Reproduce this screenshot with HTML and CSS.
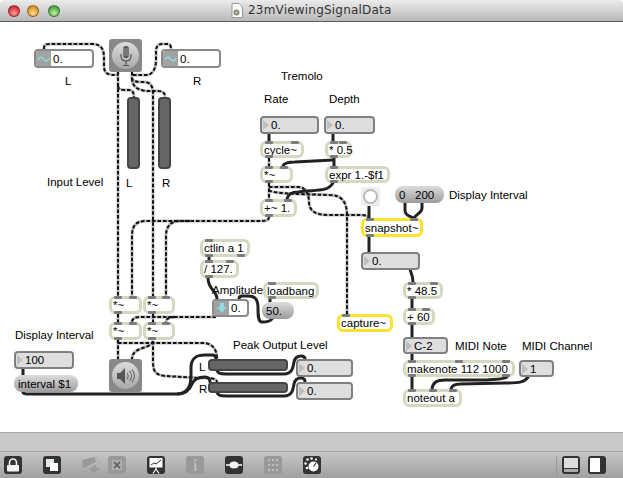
FILE: index.html
```html
<!DOCTYPE html>
<html>
  <head>
    <title>23mViewingSignalData</title>
    <link rel="stylesheet" href="styles.css">
  </head>
  <body>
    <div class="window">
      <div class="titlebar">
        <span class="light red"></span>
        <span class="light yellow"></span>
        <span class="light green"></span>
        <div class="title">
          <svg class="doc" width="12" height="15" viewBox="0 0 12 15">
            <path d="M1 .5h7l3.500 3.500v10.500h-10.500z" fill="#fafafa" stroke="#999"/>
            <circle cx="5.500" cy="9.500" r="3" fill="#8a8a8a"/>
            <circle cx="5.500" cy="9.500" r="1.200" fill="#e8b860"/>
          </svg>
          <span>23mViewingSignalData</span>
        </div>
      </div>

      <div class="canvas">
        <svg class="wires" width="623" height="410" viewBox="0 22 623 410">
          <defs>
            <g id="sigWires">
              <path d="M44 49C44 44 46 44 50 44L92 44C102 44 104 50 104 58L104 66C104 74 108 75 118 75"/>
              <path d="M133 75L146 75C153 75 156 68 156 60L156 52C156 46 158 44 162 44L168 44C170 44 171 46 171 49"/>
              <path d="M118 72L118 296"/>
              <path d="M118 86C118 89 121 90 125 90L129 90C132 90 134 92 134 97"/>
              <path d="M132 72L132 78C132 81 136 82 141 82L144 82C150 82 153 86 153 93L153 296"/>
              <path d="M132 78C132 87 138 90 146 91L158 91C163 91 165 93 165 97"/>
              <path d="M269 217C269 221 265 221 258 221L145 221C136 221 132 226 132 236L132 296"/>
              <path d="M190 221L180 221C171 221 166 226 166 236L166 296"/>
              <path d="M118 314L118 322"/>
              <path d="M153 314L153 322"/>
              <path d="M216 317L140 317C135 317 132 319 132 322"/>
              <path d="M175 317C169 317 166 319 166 322"/>
              <path d="M118 340L118 359"/>
              <path d="M153 341C152 346 145 347 140 349C135 351 132 354 132 359"/>
              <path d="M118 343L203 343C212 343 217 349 217 359"/>
              <path d="M153 341L153 362C153 372 156 375 165 376L200 378C210 378 216 378 217 382"/>
              <path d="M269 158L269 166"/>
              <path d="M269 183L269 199"/>
              <path d="M269 187L298 187C305 187 309 193 309 202C309 211 316 215 328 215L360 215C366 215 368 216 369 218"/>
              <path d="M269 190C270 193 290 194 330 195C342 195 347 203 347 215L347 314"/>
            </g>
          </defs>
          <use href="#sigWires" class="sig-base"/>
          <use href="#sigWires" class="sig-dash"/>
          <g class="msg-wires">
            <path d="M269 134L269 141"/>
            <path d="M333 134L333 141"/>
            <path d="M334 158L334 166"/>
            <path d="M333 160L295 162C287 162 284 163 283 166"/>
            <path d="M333 183C328 191 320 190 305 191L298 192C290 192 288 195 287 199"/>
            <path d="M369 206L369 218"/>
            <path d="M405 203L405 210C405 216 410 216 413 218"/>
            <path d="M422 203L422 208C422 213 416 214 414 218"/>
            <path d="M369 237L369 252"/>
            <path d="M410 269C411 274 413 275 413 282"/>
            <path d="M412 299L412 308"/>
            <path d="M412 325L412 337"/>
            <path d="M412 354L412 360"/>
            <path d="M412 377L412 389"/>
            <path d="M507 377C505 379 500 379 487 380L445 380C437 380 433 382 432 389"/>
            <path d="M528 377C525 382 520 383 505 383L460 384C455 384 452 385 451 389"/>
            <path d="M209 257L209 260"/>
            <path d="M208 278C208 290 217 290 217 299"/>
            <path d="M272 319C270 322 265 322 262 322C258 322 258 315 258 308C258 298 254 296 248 296L242 296C240 296 239 297 239 299"/>
            <path d="M270 299L270 302"/>
            <path d="M23 369L23 375"/>
            <path d="M23 392C23 394 26 394 32 394L176 394C188 394 191 386 191 375L191 368C191 358 196 355 205 355L212 355C215 355 216 357 216 359"/>
            <path d="M178 394C186 394 190 389 192 384C194 379 198 377 205 377C209 377 210 379 210 382"/>
            <path d="M217 370C217 373 220 374 226 374L284 374C292 374 293 368 294 362C295 357 298 356 301 356C304 356 305 357 305 359"/>
            <path d="M217 392C217 395 220 396 226 396L284 396C292 396 293 390 294 384C295 379 298 378 301 378C304 378 305 379 305 382"/>
          </g>
        </svg>

        <span class="label l-tremolo">Tremolo</span>
        <span class="label l-rate">Rate</span>
        <span class="label l-depth">Depth</span>
        <span class="label l-left">L</span>
        <span class="label l-right">R</span>
        <span class="label l-meter-l">L</span>
        <span class="label l-meter-r">R</span>
        <span class="label l-input">Input Level</span>
        <span class="label l-display1">Display Interval</span>
        <span class="label l-display2">Display Interval</span>
        <span class="label l-amplitude">Amplitude</span>
        <span class="label l-peak">Peak Output Level</span>
        <span class="label l-peak-l">L</span>
        <span class="label l-peak-r">R</span>
        <span class="label l-note">MIDI Note</span>
        <span class="label l-channel">MIDI Channel</span>

        <!-- audio in -->
        <div class="node sigbox n-sig-l">
          <span class="sigbox-tab"><svg width="13" height="8" viewBox="0 0 15 8"><path d="M1 5C3 1 5 1 7.500 4S12 7 14 3" fill="none" stroke="#8cdbe6" stroke-width="1.800"/></svg></span>
          <span class="sigbox-val">0.</span>
        </div>
        <div class="node sigbox n-sig-r">
          <span class="sigbox-tab"><svg width="13" height="8" viewBox="0 0 15 8"><path d="M1 5C3 1 5 1 7.500 4S12 7 14 3" fill="none" stroke="#8cdbe6" stroke-width="1.800"/></svg></span>
          <span class="sigbox-val">0.</span>
        </div>
        <div class="node adc n-mic">
          <span class="adc-disc">
            <svg width="14" height="22" viewBox="0 0 14 22">
              <rect x="4" y="1" width="6" height="12" rx="3" fill="#555"/>
              <path d="M4 4h6M4 6h6M4 8h6M4 10h6" stroke="#bbb" stroke-width=".7"/>
              <path d="M2 9v2c0 3 2 5 5 5s5-2 5-5v-2M7 16v4M4 20.500h6" fill="none" stroke="#555" stroke-width="1.200"/>
            </svg>
          </span>
        </div>
        <div class="node vmeter n-vm-l"></div>
        <div class="node vmeter n-vm-r"></div>

        <!-- tremolo -->
        <div class="node num n-rate">0.</div>
        <div class="node num n-depth">0.</div>
        <div class="node obj n-cycle"><span class="ports top"><i></i><i></i></span><span class="ports bot"><i></i></span>cycle~</div>
        <div class="node obj n-mul"><span class="ports top"><i></i><i></i></span><span class="ports bot"><i></i></span>* 0.5</div>
        <div class="node obj n-times"><span class="ports top"><i></i><i></i></span><span class="ports bot"><i></i></span>*~</div>
        <div class="node obj n-expr"><span class="ports top"><i></i></span><span class="ports bot"><i></i></span>expr 1.-$f1</div>
        <div class="node obj n-plus"><span class="ports top"><i></i><i></i></span><span class="ports bot"><i></i></span>+~ 1.</div>

        <!-- snapshot to midi -->
        <div class="node bang n-bang"><span class="bang-ring"></span></div>
        <div class="node msg n-list">0   200</div>
        <div class="node obj yellow n-snapshot"><span class="ports top"><i></i><i></i></span><span class="ports bot"><i></i></span>snapshot~</div>
        <div class="node num n-snap-val">0.</div>
        <div class="node obj n-scale"><span class="ports top"><i></i><i></i></span><span class="ports bot"><i></i></span>* 48.5</div>
        <div class="node obj n-add"><span class="ports top"><i></i><i></i></span><span class="ports bot"><i></i></span>+ 60</div>
        <div class="node num n-note">C-2</div>
        <div class="node obj n-makenote"><span class="ports top"><i></i><i></i><i></i></span><span class="ports bot"><i></i><i></i></span>makenote 112 1000</div>
        <div class="node num n-channel">1</div>
        <div class="node obj n-noteout"><span class="ports top"><i></i><i></i><i></i></span>noteout a</div>
        <div class="node obj yellow n-capture"><span class="ports top"><i></i></span>capture~</div>

        <!-- amplitude -->
        <div class="node obj n-ctlin"><span class="ports top"><i></i></span><span class="ports bot"><i></i><i></i></span>ctlin a 1</div>
        <div class="node obj n-div"><span class="ports top"><i></i><i></i></span><span class="ports bot"><i></i></span>/ 127.</div>
        <div class="node sigbox n-amp">
          <span class="sigbox-tab"><svg width="10" height="10" viewBox="0 0 10 10"><path d="M3 0h4v4h3l-5 6-5-6h3z" fill="#8cdbe6"/></svg></span>
          <span class="sigbox-val">0.</span>
        </div>
        <div class="node obj n-loadbang"><span class="ports top"><i></i></span><span class="ports bot"><i></i></span>loadbang</div>
        <div class="node msg n-fifty">50.</div>

        <!-- audio out -->
        <div class="node obj n-gain1"><span class="ports top"><i></i><i></i></span><span class="ports bot"><i></i></span>*~</div>
        <div class="node obj n-gain2"><span class="ports top"><i></i><i></i></span><span class="ports bot"><i></i></span>*~</div>
        <div class="node obj n-gain3"><span class="ports top"><i></i><i></i></span><span class="ports bot"><i></i></span>*~</div>
        <div class="node obj n-gain4"><span class="ports top"><i></i><i></i></span><span class="ports bot"><i></i></span>*~</div>
        <div class="node adc n-speaker">
          <span class="adc-disc">
            <svg width="20" height="18" viewBox="0 0 20 18">
              <path d="M1 6h3l5-5v16l-5-5h-3z" fill="#555"/>
              <path d="M11 6c1.500 2 1.500 4 0 6M13.500 4c2.500 3 2.500 7 0 10M16 2.500c3 4 3 9 0 13" fill="none" stroke="#666" stroke-width="1.100"/>
            </svg>
          </span>
        </div>
        <div class="node num n-interval-num">100</div>
        <div class="node msg n-interval">interval $1</div>
        <div class="node hmeter n-hm-l"></div>
        <div class="node hmeter n-hm-r"></div>
        <div class="node num n-peak-l">0.</div>
        <div class="node num n-peak-r">0.</div>
      </div>

      <div class="statusbar"></div>

      <div class="toolbar">
        <svg class="tool" width="18" height="18" viewBox="0 0 18 18"><rect width="18" height="18" rx="3" fill="#333"/><path d="M5.500 9V6.500a3.500 3.500 0 0 1 7 0V9" fill="none" stroke="#f4f4f4" stroke-width="1.600"/><rect x="3" y="9" width="12" height="6.500" rx="1" fill="#f4f4f4"/></svg>
        <svg class="tool" width="18" height="18" viewBox="0 0 18 18"><rect width="18" height="18" rx="3" fill="#333"/><rect x="3" y="3" width="8" height="8" fill="#dfe9e6"/><rect x="7" y="7" width="8" height="8" fill="#fff"/></svg>
        <svg class="tool" width="18" height="18" viewBox="0 0 18 18"><g fill="#999"><path d="M0 4l13-3 2 4-11 6z"/><path d="M7 13l11-7v6l-7 5z"/><path d="M0 4l4 7-3 1z"/></g><ellipse cx="15" cy="3" rx="2" ry="2.500" fill="#b5b5b5"/><ellipse cx="16" cy="9" rx="2" ry="3" fill="#b5b5b5"/></svg>
        <svg class="tool tool-tight" width="18" height="18" viewBox="0 0 18 18"><rect width="18" height="18" rx="3" fill="#999"/><rect x="4" y="4" width="10" height="10" fill="#b0b0b0"/><path d="M6 6l6 6M12 6l-6 6" stroke="#666" stroke-width="1.800"/></svg>
        <svg class="tool" width="18" height="18" viewBox="0 0 18 18"><rect width="18" height="18" rx="3" fill="#333"/><rect x="2.500" y="2" width="13" height="9.500" fill="#fff"/><path d="M4 9l3-2 2 1 5-4" fill="none" stroke="#333" stroke-width="1"/><path d="M9 11.500v2M9 13l-3 4.500M9 13l3 4.500" stroke="#fff" stroke-width="1.200"/></svg>
        <svg class="tool" width="18" height="18" viewBox="0 0 18 18"><rect width="18" height="18" rx="3" fill="#999"/><rect x="8" y="3" width="2.500" height="2.500" fill="#b8b8b8"/><rect x="8" y="7" width="2.500" height="8" fill="#b8b8b8"/></svg>
        <svg class="tool" width="18" height="18" viewBox="0 0 18 18"><rect width="18" height="18" rx="3" fill="#333"/><path d="M1 9h16" stroke="#f4f4f4" stroke-width="1.600"/><ellipse cx="9" cy="9" rx="4.500" ry="3.500" fill="#f4f4f4"/></svg>
        <svg class="tool" width="18" height="18" viewBox="0 0 18 18"><rect width="18" height="18" rx="3" fill="#999"/><g fill="#bdbdbd"><rect x="4" y="3" width="2" height="2"/><rect x="8" y="3" width="2" height="2"/><rect x="12" y="3" width="2" height="2"/><rect x="4" y="8" width="2" height="2"/><rect x="8" y="8" width="2" height="2"/><rect x="12" y="8" width="2" height="2"/><rect x="4" y="13" width="2" height="2"/><rect x="8" y="13" width="2" height="2"/><rect x="12" y="13" width="2" height="2"/></g></svg>
        <svg class="tool" width="18" height="18" viewBox="0 0 18 18"><rect width="18" height="18" rx="3" fill="#333"/><g fill="#fff"><circle cx="8.500" cy="2.500" r="1.300"/><circle cx="13" cy="3.500" r="1.100"/><circle cx="4.500" cy="3.500" r="1.300"/><circle cx="2.500" cy="7.500" r="1.300"/><circle cx="4" cy="12" r="1.300"/><circle cx="10.500" cy="10.500" r="5"/></g><path d="M10.500 10.500l2.500-3.500" stroke="#333" stroke-width="1.200"/></svg>
        <div class="toolbar-right">
          <svg width="18" height="18" viewBox="0 0 18 18"><rect width="18" height="18" rx="3" fill="#333"/><rect x="2" y="2" width="14" height="10" fill="#ddd"/><rect x="2" y="13" width="14" height="3" fill="#aaa"/></svg>
          <svg width="18" height="18" viewBox="0 0 18 18"><rect width="18" height="18" rx="3" fill="#333"/><rect x="2" y="2" width="10" height="14" fill="#fff"/></svg>
        </div>
      </div>
    </div>
  </body>
</html>
```
FILE: styles.css
```css
/* patcher window */
body {
  margin: 0;
  font-family: "Liberation Sans", Arial, sans-serif;
  font-size: 11.500px;
  color: #000;
  background: #fff;
}

.window {
  display: flex;
  flex-direction: column;
  width: 623px;
  height: 478px;
  overflow: hidden;
}

.titlebar {
  position: relative;
  display: flex;
  align-items: center;
  flex: none;
  height: 22px;
  box-sizing: border-box;
  padding-left: 8px;
  gap: 7px;
  background: linear-gradient(#ececec, #b8b8b8);
  border-bottom: 1px solid #5c5c5c;
  border-radius: 4px 4px 0 0;
}

.light {
  width: 12px;
  height: 12px;
  border-radius: 50%;
  border: 1px solid rgba(0, 0, 0, 0.35);
  box-sizing: border-box;
}

.light.red { background: radial-gradient(circle at 50% 70%, #ff9a9a, #d5303a 70%); }
.light.yellow { background: radial-gradient(circle at 50% 70%, #ffdf9a, #d98f26 70%); }
.light.green { background: radial-gradient(circle at 50% 70%, #c4f0a6, #4da63e 70%); margin-left: 2px; }

.title {
  position: absolute;
  left: 231px;
  top: 3px;
  display: flex;
  align-items: center;
  gap: 5px;
  font-family: "DejaVu Sans", sans-serif;
  font-size: 12px;
  letter-spacing: 0.200px;
  color: #333;
  line-height: 15px;
}

.doc { flex: none; }

.canvas {
  position: relative;
  flex: 1;
  background: #fff;
}

.wires {
  position: absolute;
  left: 0;
  top: 0;
}

.wires path {
  fill: none;
}

.sig-base {
  stroke: #bbb;
  stroke-width: 3;
}

.sig-dash {
  stroke: #111;
  stroke-width: 2;
  stroke-dasharray: 3.500 2;
}

.msg-wires {
  stroke: #222;
  stroke-width: 3;
  stroke-linecap: round;
}

.label,
.node {
  position: absolute;
  white-space: pre;
}

.label {
  line-height: 14px;
}

.l-tremolo { left: 281px; top: 47px; }
.l-rate { left: 264px; top: 70px; }
.l-depth { left: 329px; top: 70px; }
.l-left { left: 65px; top: 52px; }
.l-right { left: 193px; top: 52px; }
.l-meter-l { left: 126px; top: 154px; }
.l-meter-r { left: 162px; top: 154px; }
.l-input { left: 47px; top: 153px; }
.l-display1 { left: 15px; top: 306px; }
.l-display2 { left: 449px; top: 166px; }
.l-amplitude { left: 212px; top: 261px; }
.l-peak { left: 233px; top: 316px; }
.l-peak-l { left: 199px; top: 338px; }
.l-peak-r { left: 199px; top: 360px; }
.l-note { left: 455px; top: 317px; }
.l-channel { left: 522px; top: 317px; }

/* objects */
.node {
  box-sizing: border-box;
  display: flex;
  align-items: center;
}

.obj {
  padding-left: 1px;
  background: #fff;
  border: 3px solid #d4d8c0;
  border-radius: 6px;
}

.obj.yellow {
  border-color: #fde12a;
}

.ports {
  position: absolute;
  left: 2px;
  right: 2px;
  display: flex;
  justify-content: space-between;
}

.ports.top { top: -3px; }
.ports.bot { bottom: -3px; }

.ports i {
  display: block;
  width: 8px;
  height: 3px;
  background: #7c7c7c;
  border-radius: 1px;
}

.num {
  padding-left: 9px;
  background: #dedede;
  border: 2px solid #808080;
  border-radius: 4px;
}

.num::before {
  content: "";
  position: absolute;
  left: 1px;
  top: 50%;
  margin-top: -5px;
  border-left: 6px solid #bdbdbd;
  border-top: 5px solid transparent;
  border-bottom: 5px solid transparent;
}

.sigbox {
  background: #fff;
  border: 2px solid #8a8a8a;
  border-radius: 4px;
  overflow: hidden;
}

.sigbox-tab {
  display: flex;
  align-items: center;
  justify-content: center;
  flex: none;
  align-self: stretch;
  width: 15px;
  background: #a2a2a2;
}

.sigbox-val {
  padding-left: 2px;
}

.msg {
  padding-left: 4px;
  background: linear-gradient(#dcdcdc, #9c9c9c);
  border-radius: 8px;
}

.adc {
  justify-content: center;
  background: #888;
  border-radius: 3px;
}

.adc-disc {
  display: flex;
  align-items: center;
  justify-content: center;
  width: 27px;
  height: 27px;
  border-radius: 50%;
  background: linear-gradient(#dcdcdc, #a8a8a8);
}

.vmeter,
.hmeter {
  background: #666;
  border: 2px solid #454545;
  border-radius: 4px;
}

.bang {
  justify-content: center;
  background: #eee;
  border-radius: 3px;
}

.bang-ring {
  width: 15px;
  height: 15px;
  box-sizing: border-box;
  border: 2px solid #bbb;
  border-radius: 50%;
  background: #fff;
}

/* places on the patcher */
.n-sig-l { left: 34px; top: 27px; width: 60px; height: 19px; }
.n-sig-r { left: 161px; top: 27px; width: 60px; height: 19px; }
.n-mic { left: 109px; top: 17px; width: 33px; height: 33px; }
.n-vm-l { left: 127px; top: 75px; width: 13px; height: 72px; }
.n-vm-r { left: 158px; top: 75px; width: 13px; height: 72px; }
.n-rate { left: 260px; top: 94px; width: 59px; height: 18px; }
.n-depth { left: 324px; top: 94px; width: 51px; height: 18px; }
.n-cycle { left: 260px; top: 119px; width: 44px; height: 17px; }
.n-mul { left: 325px; top: 119px; width: 27px; height: 17px; }
.n-times { left: 260px; top: 144px; width: 33px; height: 17px; }
.n-expr { left: 325px; top: 144px; width: 65px; height: 17px; }
.n-plus { left: 260px; top: 177px; width: 37px; height: 18px; }
.n-bang { left: 361px; top: 165px; width: 19px; height: 19px; }
.n-list { left: 395px; top: 164px; width: 49px; height: 17px; }
.n-snapshot { left: 361px; top: 196px; width: 62px; height: 19px; }
.n-snap-val { left: 361px; top: 230px; width: 59px; height: 18px; }
.n-scale { left: 403px; top: 260px; width: 40px; height: 17px; }
.n-add { left: 403px; top: 286px; width: 32px; height: 17px; }
.n-note { left: 403px; top: 315px; width: 45px; height: 17px; }
.n-makenote { left: 403px; top: 338px; width: 112px; height: 17px; }
.n-channel { left: 519px; top: 338px; width: 35px; height: 17px; }
.n-noteout { left: 403px; top: 367px; width: 59px; height: 18px; }
.n-capture { left: 337px; top: 292px; width: 56px; height: 18px; }
.n-ctlin { left: 200px; top: 217px; width: 50px; height: 18px; }
.n-div { left: 200px; top: 238px; width: 39px; height: 18px; }
.n-amp { left: 212px; top: 277px; width: 37px; height: 18px; }
.n-loadbang { left: 263px; top: 260px; width: 56px; height: 17px; }
.n-fifty { left: 262px; top: 280px; width: 32px; height: 17px; }
.n-gain1 { left: 109px; top: 274px; width: 33px; height: 18px; }
.n-gain2 { left: 143px; top: 274px; width: 32px; height: 18px; }
.n-gain3 { left: 109px; top: 300px; width: 33px; height: 18px; }
.n-gain4 { left: 143px; top: 300px; width: 32px; height: 18px; }
.n-speaker { left: 109px; top: 337px; width: 33px; height: 33px; }
.n-interval-num { left: 14px; top: 329px; width: 60px; height: 18px; }
.n-interval { left: 14px; top: 353px; width: 64px; height: 17px; }
.n-hm-l { left: 208px; top: 337px; width: 80px; height: 12px; }
.n-hm-r { left: 208px; top: 360px; width: 80px; height: 11px; }
.n-peak-l { left: 296px; top: 337px; width: 57px; height: 18px; }
.n-peak-r { left: 296px; top: 360px; width: 57px; height: 18px; }

/* bottom bars */
.statusbar {
  flex: none;
  height: 20px;
  box-sizing: border-box;
  background: #c9c9c9;
  border-top: 1px solid #a8a8a8;
  border-bottom: 1px solid #a8a8a8;
}

.toolbar {
  display: flex;
  align-items: flex-start;
  flex: none;
  height: 26px;
  box-sizing: border-box;
  padding: 4px 17px 0 4px;
  gap: 21px;
  background: linear-gradient(#c6c6c6, #a0a0a0);
}

.tool-tight {
  margin-left: -13px;
}

.toolbar-right {
  display: flex;
  gap: 8px;
  margin-left: auto;
  padding-left: 5px;
  height: 22px;
  border-left: 1px solid #999;
}
```
